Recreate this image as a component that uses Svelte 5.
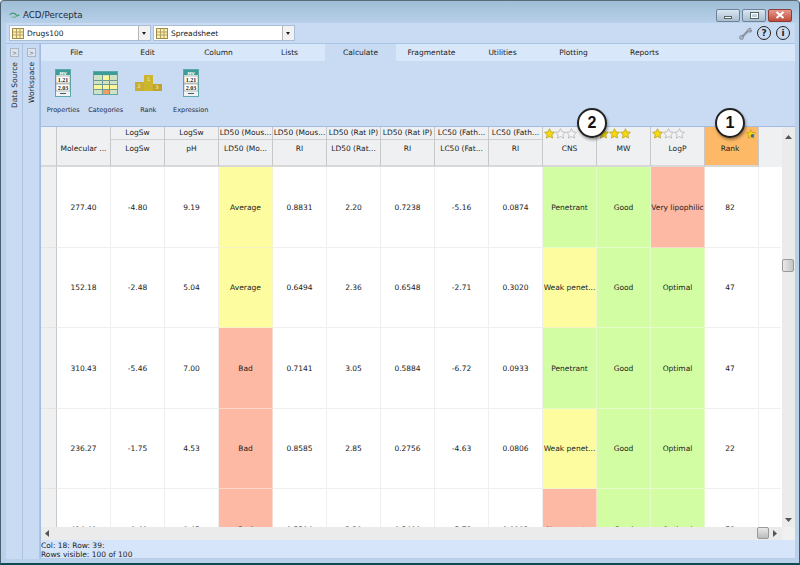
<script>
  const tabs = ['File', 'Edit', 'Column', 'Lists', 'Calculate', 'Fragmentate', 'Utilities', 'Plotting', 'Reports'];
  const tools = [
    { label: 'Properties', icon: 'mv' },
    { label: 'Categories', icon: 'cat' },
    { label: 'Rank', icon: 'rank' },
    { label: 'Expression', icon: 'mv' }
  ];
  const head = [
    { top: '', sub: 'Molecular ...' },
    { top: 'LogSw', sub: 'LogSw' },
    { top: 'LogSw', sub: 'pH' },
    { top: 'LD50 (Mous...', sub: 'LD50 (Mo...' },
    { top: 'LD50 (Mous...', sub: 'RI' },
    { top: 'LD50 (Rat IP)', sub: 'LD50 (Rat...' },
    { top: 'LD50 (Rat IP)', sub: 'RI' },
    { top: 'LC50 (Fath...', sub: 'LC50 (Fat...' },
    { top: 'LC50 (Fath...', sub: 'RI' },
    { stars: 1, sub: 'CNS' },
    { stars: 3, sub: 'MW' },
    { stars: 1, sub: 'LogP' },
    { rank: true, sub: 'Rank' }
  ];
  // y = yellow, r = red, g = green
  const rows = [
    ['277.40', '-4.80', '9.19', 'y:Average', '0.8831', '2.20', '0.7238', '-5.16', '0.0874', 'g:Penetrant', 'g:Good', 'r:Very lipophilic', '82'],
    ['152.18', '-2.48', '5.04', 'y:Average', '0.6494', '2.36', '0.6548', '-2.71', '0.3020', 'y:Weak penet...', 'g:Good', 'g:Optimal', '47'],
    ['310.43', '-5.46', '7.00', 'r:Bad', '0.7141', '3.05', '0.5884', '-6.72', '0.0933', 'g:Penetrant', 'g:Good', 'g:Optimal', '47'],
    ['236.27', '-1.75', '4.53', 'r:Bad', '0.8585', '2.85', '0.2756', '-4.63', '0.0806', 'y:Weak penet...', 'g:Good', 'g:Optimal', '22'],
    ['414.49', '-0.40', '9.45', 'r:Bad', '0.5594', '2.20', '0.5400', '-5.78', '0.0992', 'r:Non-penet...', 'g:Good', 'g:Optimal', '78']
  ];

  function parse(v) {
    const m = v.match(/^([yrg]):(.*)$/);
    return m ? { cls: m[1], text: m[2] } : { cls: '', text: v };
  }

  const star = 'M5 .6l1.35 2.9 3.15.4-2.3 2.2.6 3.1L5 7.7 2.2 9.2l.6-3.1L.5 3.9l3.15-.4z';
</script>

<div class="window">
  <header class="titlebar">
    <svg class="logo" width="11" height="7" viewBox="0 0 14 8">
      <path d="M1 3c3-3 6-2 8 0s3 1 4 0" fill="none" stroke="#3f9a6c" stroke-width="1.6" />
      <path d="M3 6c3 1 5 1 8-2" fill="none" stroke="#6fb890" stroke-width="1.4" />
    </svg>
    <span class="title">ACD/Percepta</span>
    <div class="winbtns">
      <span class="wb"><i class="min"></i></span>
      <span class="wb"><i class="max"></i></span>
      <span class="wb close">
        <svg width="10" height="8" viewBox="0 0 10 8"><path d="M1.5 1l7 6M8.5 1l-7 6" stroke="#fff" stroke-width="2" /></svg>
      </span>
    </div>
  </header>

  <div class="client">
    <div class="combos">
      <div class="combo first">
        {@render gridIcon()}
        <span>Drugs100</span>
        <b class="drop"></b>
      </div>
      <div class="combo second">
        {@render gridIcon()}
        <span>Spreadsheet</span>
        <b class="drop"></b>
      </div>
      <div class="helpers">
        <svg class="wrench" width="13" height="13" viewBox="0 0 13 13">
          <path d="M2.5 10.500L9.500 3.500" stroke="#8b96a2" stroke-width="2.400" />
          <path d="M8 3.500L10 1.200 12 1.500 10.500 3 11.500 4 12.600 2.800 12.200 5 9.500 5z" fill="#a9b6c4" stroke="#75808c" stroke-width=".7" />
          <circle cx="2.500" cy="10.500" r="2" fill="#a9b6c4" stroke="#75808c" stroke-width=".7" />
        </svg>
        <span class="round">?</span>
        <span class="round">i</span>
      </div>
    </div>

    <div class="body">
      <aside class="rail">
        <span class="railbtn">&gt;</span>
        <span class="vert">Data Source</span>
      </aside>
      <aside class="rail">
        <span class="railbtn">&gt;</span>
        <span class="vert">Workspace</span>
      </aside>

      <main class="main">
        <nav class="tabs">
          {#each tabs as t}
            <span class="tab" class:active={t === 'Calculate'}>{t}</span>
          {/each}
        </nav>

        <div class="ribbon">
          {#each tools as t}
            <div class="tool">
              <div class="toolicon">
                {#if t.icon === 'mv'}
                  <svg width="16" height="28" viewBox="0 0 16 28">
                    <rect x=".5" y=".5" width="15" height="27" fill="#eef4f4" stroke="#5fa8a8" />
                    <rect x="1" y="1" width="14" height="5" fill="#3c9c96" />
                    <text x="8" y="5.500" class="mvt">MV</text>
                    <rect x="1" y="7" width="14" height="7" fill="#fff" stroke="#777" stroke-width=".5" />
                    <text x="8" y="13" class="num">1.21</text>
                    <rect x="1" y="15" width="14" height="7" fill="#fff" stroke="#777" stroke-width=".5" />
                    <text x="8" y="21" class="num">2.03</text>
                    <rect x="5" y="24" width="6" height="1" fill="#555" />
                  </svg>
                {:else if t.icon === 'cat'}
                  <svg width="25" height="24" viewBox="0 0 25 24">
                    <rect width="25" height="24" fill="#cfe3c4" />
                    <rect width="25" height="4" fill="#3c9c96" />
                    <rect x="10" y="5" width="6" height="4" fill="#fdf59a" />
                    <rect y="14" width="9" height="4" fill="#fdf59a" />
                    <rect x="10" y="14" width="15" height="4" fill="#fdf59a" />
                    <rect x="10" y="19" width="6" height="4" fill="#f0a060" />
                    <path d="M9.500 4v20M16.500 4v20M0 9.500h25M0 13.500h25M0 18.500h25" stroke="#6f9a96" />
                    <rect x=".5" y=".5" width="24" height="23" fill="none" stroke="#5fa8a8" />
                  </svg>
                {:else}
                  <svg width="27" height="16" viewBox="0 0 27 16">
                    <rect x="0" y="7" width="9" height="9" fill="#c7ae37" />
                    <rect x="9" y="0" width="9" height="16" fill="#cdb62e" />
                    <rect x="18" y="9" width="9" height="7" fill="#bda532" />
                    <text x="13.500" y="6" class="pod">1</text>
                    <text x="4" y="13" class="pod">2</text>
                    <text x="22" y="14" class="pod">3</text>
                  </svg>
                {/if}
              </div>
              <span>{t.label}</span>
            </div>
          {/each}
        </div>

        <div class="sheet">
          <div class="tablewrap">
            <div class="headrow">
              <div class="corner"></div>
              {#each head as h}
                <div class="hcell" class:rankhead={h.rank}>
                  {#if h.stars !== undefined || h.rank}
                    <div class="stars">
                      {#if h.rank}
                        <svg class="rankstar" width="10" height="10" viewBox="0 0 10 10"><path d={star} fill="#f6d90f" stroke="#a58b1a" stroke-width=".5" /><circle cx="6.500" cy="6.800" r="1.800" fill="#3a6ea5" /></svg>
                      {:else}
                        {#each [0, 1, 2] as i}
                          <svg width="11" height="11" viewBox="0 0 10 10"><path d={star} fill={i < h.stars ? '#f6d90f' : '#f4f4f4'} stroke={i < h.stars ? '#b09517' : '#a8a8a8'} stroke-width=".6" /></svg>
                        {/each}
                      {/if}
                    </div>
                  {:else if h.top}
                    <div class="htop">{h.top}</div>
                  {:else}
                    <div class="htop blank"></div>
                  {/if}
                  <div class="hsub">{h.sub}</div>
                </div>
              {/each}
            </div>

            {#each rows as row}
              <div class="row">
                <div class="rowhead"></div>
                {#each row as v, i}
                  {@const c = parse(v)}
                  <div class="cell {c.cls}" class:rankcell={i === row.length - 1}>{c.text}</div>
                {/each}
                <div class="cell filler"></div>
              </div>
            {/each}
          </div>

          <div class="vscroll">
            <svg class="arrow" width="7" height="4" viewBox="0 0 7 4"><path d="M0 4l3.500-4 3.500 4z" fill="#555" /></svg>
            <div class="thumb"></div>
            <svg class="arrow" width="7" height="4" viewBox="0 0 7 4"><path d="M0 0l3.500 4 3.500-4z" fill="#555" /></svg>
          </div>
          <div class="hscroll">
            <svg width="4" height="7" viewBox="0 0 4 7"><path d="M4 0L0 3.500 4 7z" fill="#555" /></svg>
            <div class="hthumb"></div>
            <svg width="4" height="7" viewBox="0 0 4 7"><path d="M0 0l4 3.500L0 7z" fill="#555" /></svg>
          </div>
          <div class="sizer"></div>
        </div>

        <footer class="status">
          <div>Col: 18: Row: 39:</div>
          <div>Rows visible: 100 of 100</div>
        </footer>
      </main>
    </div>
  </div>

  <span class="callout one">1</span>
  <span class="callout two">2</span>
</div>

{#snippet gridIcon()}
  <svg class="gicon" width="12" height="11" viewBox="0 0 12 11">
    <rect x=".5" y=".5" width="11" height="10" fill="#fbf0b4" stroke="#a08a4a" />
    <path d="M4.500 1v9M8 1v9M1 4h10M1 7h10" stroke="#b3a060" />
  </svg>
{/snippet}

<style>
  :global(body) {
    margin: 0;
    background: #fff;
  }

  .window {
    position: relative;
    width: 800px;
    height: 565px;
    box-sizing: border-box;
    display: flex;
    flex-direction: column;
    overflow: hidden;
    background: linear-gradient(#9fbdd6, #b9d1ea 23px);
    border-top: 1px solid #5c6a76;
    border-left: 1px solid #49606f;
    border-right: 1px solid #2d5f6e;
    border-bottom: 2px solid #0f4a55;
    border-radius: 4px 4px 0 0;
    font-family: "DejaVu Sans", sans-serif;
    font-size: 7.5px;
    color: #222;
  }

  .titlebar {
    height: 22px;
    box-sizing: border-box;
    flex: none;
    display: flex;
    align-items: center;
    padding: 6px 7px 0 8px;
  }

  .logo {
    margin-right: 3px;
  }

  .title {
    font-size: 8.7px;
    color: #1c2a38;
  }

  .winbtns {
    margin-left: auto;
    display: flex;
    gap: 2px;
  }

  .wb {
    width: 24px;
    height: 13px;
    box-sizing: border-box;
    border: 1px solid #6d8296;
    border-radius: 2px;
    background: linear-gradient(#dbe6f1, #a9bdd0);
    display: flex;
    align-items: center;
    justify-content: center;
  }

  .wb.close {
    background: linear-gradient(#e69a90, #c04a3a);
    border-color: #8b3c34;
  }

  .min {
    width: 8px;
    height: 3px;
    background: #fff;
    border: 1px solid #566;
    box-sizing: border-box;
    margin-top: 4px;
  }

  .max {
    width: 9px;
    height: 7px;
    border: 2px solid #fff;
    outline: 1px solid #566;
    outline-offset: -1px;
    box-sizing: border-box;
  }

  .client {
    flex: 1;
    min-height: 0;
    margin: 0 4px 4px 5px;
    display: flex;
    flex-direction: column;
    background: #c9dbf3;
  }

  .combos {
    height: 20px;
    flex: none;
    display: flex;
    align-items: center;
    padding-left: 3px;
    background: #c9dbf3;
  }

  .combo {
    height: 16px;
    box-sizing: border-box;
    background: #fff;
    border: 1px solid #a8bdd6;
    display: flex;
    align-items: center;
    padding-left: 2px;
    font-size: 7.5px;
    position: relative;
  }

  .combo.first {
    width: 142px;
    margin-right: 2px;
  }

  .combo.second {
    width: 142px;
  }

  .gicon {
    margin-right: 3px;
  }

  .drop {
    position: absolute;
    right: 0;
    top: 0;
    width: 11px;
    height: 14px;
    border-left: 1px solid #b5b5b5;
    background: #f2f2f2;
  }

  .drop::after {
    content: '';
    position: absolute;
    left: 3px;
    top: 6px;
    border: 2.5px solid transparent;
    border-top: 3px solid #222;
  }

  .helpers {
    margin-left: auto;
    display: flex;
    align-items: center;
    padding-right: 5px;
  }

  .round {
    width: 14px;
    height: 14px;
    margin-left: 5px;
    box-sizing: border-box;
    border: 1.5px solid #222;
    border-radius: 50%;
    display: flex;
    align-items: center;
    justify-content: center;
    font-size: 9px;
    font-weight: bold;
  }

  .body {
    flex: 1;
    min-height: 0;
    display: flex;
    border-top: 1px solid #a8c4e4;
  }

  .rail {
    width: 15px;
    flex: none;
    padding-left: 1px;
    background: #c9dbf3;
    border-right: 1px solid #adc5e2;
    display: flex;
    flex-direction: column;
    align-items: center;
    padding-top: 4px;
  }

  .railbtn {
    width: 7px;
    height: 7px;
    background: #dde4ee;
    border: 1px solid #a9b6c8;
    color: #667;
    font-size: 6px;
    line-height: 7px;
    text-align: center;
  }

  .vert {
    writing-mode: vertical-rl;
    transform: rotate(180deg);
    font-size: 7.5px;
    margin-top: 5px;
    color: #1c2a38;
  }

  .main {
    flex: 1;
    min-width: 0;
    display: flex;
    flex-direction: column;
    border-left: 1px solid #a3bde2;
  }

  .tabs {
    height: 17px;
    flex: none;
    display: flex;
    background: #d8e7fa;
  }

  .tab {
    width: 71px;
    text-align: center;
    line-height: 17px;
    flex: none;
  }

  .tab.active {
    background: #c9dbf3;
  }

  .ribbon {
    height: 65px;
    flex: none;
    display: flex;
    padding-left: 1px;
    background: #c9dbf3;
  }

  .tool {
    width: 42.5px;
    display: flex;
    flex-direction: column;
    align-items: center;
    font-size: 6.5px;
    color: #1e2a40;
  }

  .toolicon {
    height: 37px;
    margin-top: 3px;
    margin-bottom: 5px;
    display: flex;
    align-items: center;
    justify-content: center;
  }

  .mvt {
    font-size: 4px;
    fill: #fff;
    text-anchor: middle;
    font-weight: bold;
  }

  .num {
    font-size: 6px;
    fill: #222;
    text-anchor: middle;
    font-family: "Liberation Serif", serif;
    font-weight: bold;
  }

  .pod {
    font-size: 5px;
    fill: #e6d98a;
    text-anchor: middle;
    font-weight: bold;
  }

  .sheet {
    flex: 1;
    min-height: 0;
    display: grid;
    grid-template-columns: 1fr 13px;
    grid-template-rows: 1fr 13px;
    background: #fff;
    border-top: 1px solid #a3bde2;
  }

  .tablewrap {
    overflow: hidden;
    min-height: 0;
    min-width: 0;
  }

  .headrow {
    display: flex;
    height: 40px;
    background: #eff0f2;
  }

  .corner {
    width: 16px;
    flex: none;
    background: #eff0f2;
    border-right: 1px solid #c8c8c8;
    border-bottom: 2px solid #d8d8d8;
    box-sizing: border-box;
  }

  .hcell {
    width: 54px;
    flex: none;
    box-sizing: border-box;
    border-right: 1px solid #c8c8c8;
    border-bottom: 2px solid #d8d8d8;
    display: flex;
    flex-direction: column;
    text-align: center;
    white-space: nowrap;
    position: relative;
  }

  .htop {
    height: 13px;
    line-height: 11px;
    box-sizing: border-box;
    border-bottom: 1px solid #d0d0d0;
  }

  .htop.blank {
    border-bottom: none;
  }

  .hsub {
    flex: 1;
    line-height: 15px;
    padding-top: 1px;
  }

  .stars {
    height: 13px;
    display: flex;
    align-items: center;
    padding-left: 1px;
  }

  .rankhead {
    background: #feb966;
    padding-right: 3px;
  }

  .rankstar {
    position: absolute;
    right: 2px;
    top: 2px;
  }

  .row {
    display: flex;
    height: 80.5px;
  }

  .rowhead {
    width: 16px;
    flex: none;
    box-sizing: border-box;
    background: #eff0f2;
    border-right: 1px solid #c8c8c8;
    border-bottom: 1px solid #e4e4e4;
  }

  .cell {
    width: 54px;
    flex: none;
    box-sizing: border-box;
    padding-top: 1px;
    border-right: 1px solid #efefef;
    border-bottom: 1px solid #efefef;
    display: flex;
    align-items: center;
    justify-content: center;
    white-space: nowrap;
  }

  .cell.rankcell {
    padding-right: 3px;
  }

  .cell.filler {
    width: 22px;
    border-right: none;
  }

  .cell.y {
    background: #fdfd9f;
    border-color: #f4f4c8;
  }

  .cell.r {
    background: #feb9a4;
    border-color: #fcd8cc;
  }

  .cell.g {
    background: #d3fda2;
    border-color: #e4fac8;
  }

  .vscroll {
    background: #ebebeb;
    display: flex;
    flex-direction: column;
    align-items: center;
    justify-content: space-between;
    padding: 8px 0 5px;
    position: relative;
  }

  .thumb {
    position: absolute;
    top: 132px;
    left: 0;
    width: 12px;
    height: 13px;
    box-sizing: border-box;
    border: 1px solid #999;
    border-radius: 2px;
    background: linear-gradient(90deg, #e8e8e8, #c4c4c4);
  }

  .hscroll {
    background: #ebebeb;
    display: flex;
    align-items: center;
    justify-content: space-between;
    padding: 0 5px 0 4px;
    position: relative;
  }

  .hthumb {
    position: absolute;
    top: 0;
    right: 13px;
    width: 12px;
    height: 12px;
    box-sizing: border-box;
    border: 1px solid #999;
    border-radius: 2px;
    background: linear-gradient(#e8e8e8, #bcbcbc);
  }

  .sizer {
    background: #f0f0f0;
  }

  .status {
    height: 19px;
    flex: none;
    background: #d6e5f9;
    line-height: 9px;
    padding-top: 1px;
    box-sizing: border-box;
    border-bottom: 1px solid #b9cde6;
  }

  .callout {
    position: absolute;
    width: 30px;
    height: 30px;
    box-sizing: border-box;
    background: #fff;
    border: 2px solid #222;
    border-radius: 50%;
    box-shadow: 1px 2px 3px #0006;
    display: flex;
    align-items: center;
    justify-content: center;
    font-family: "Liberation Sans", sans-serif;
    font-size: 16px;
    font-weight: bold;
    color: #111;
  }

  .callout.one {
    left: 714px;
    top: 107px;
  }

  .callout.two {
    left: 576px;
    top: 107px;
  }
</style>
